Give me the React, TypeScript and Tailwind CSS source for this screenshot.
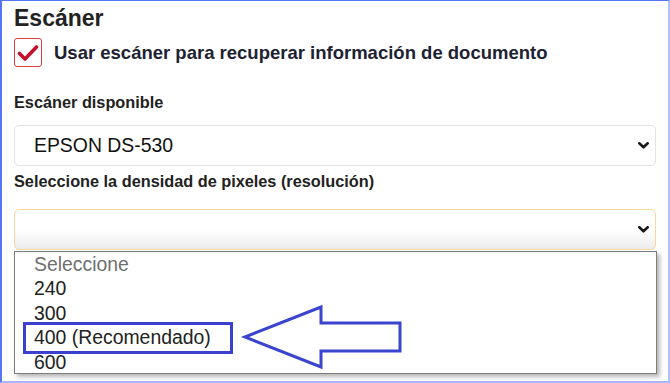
import React from "react";

function Chevron() {
  return (
    <svg width="11" height="7" viewBox="0 0 11 7" className="shrink-0">
      <path d="M1.3 1.3 L5.5 5.3 L9.7 1.3" fill="none" stroke="#1a1a1a" strokeWidth="2.6" strokeLinecap="round" strokeLinejoin="round" />
    </svg>
  );
}

export default function App() {
  const font = { fontFamily: '"Liberation Sans", Arial, sans-serif' };
  return (
    <div
      className="relative w-[670px] h-[383px] bg-white border-l-2 border-t border-r-2 border-b-2 border-l-[#5674f6] border-t-[#5674f6] border-r-[#b1bffb] border-b-[#a9b8fb] overflow-hidden"
      style={font}
    >
      <div className="pl-[12px] pr-[12px] flex flex-col">
        <h1 className="mt-[3px] text-[23px] leading-[28px] font-bold text-[#222]">Escáner</h1>

        <div className="mt-[6px] flex items-center h-[29px]">
          <div className="w-[28px] h-[29px] rounded-[3px] border-[1.5px] border-[#d9403f] flex items-center justify-center">
            <svg width="22" height="18" viewBox="0 0 22 18">
              <path d="M2.5 9.5 L8 15 L19.5 3" fill="none" stroke="#c4112a" strokeWidth="3.6" strokeLinecap="round" strokeLinejoin="round" />
            </svg>
          </div>
          <span className="ml-[12px] text-[18.5px] leading-[22px] font-bold text-[#1d2233]">
            Usar escáner para recuperar información de documento
          </span>
        </div>

        <label className="mt-[25px] text-[16.3px] leading-[20px] font-bold text-[#222]">Escáner disponible</label>

        <div className="mt-[13px] h-[41px] w-[642px] rounded-[5px] border border-[#e3e3e3] flex items-center justify-between pl-[19px] pr-[6px]">
          <span className="text-[19.4px] text-[#111]">EPSON DS-530</span>
          <Chevron />
        </div>

        <label className="mt-[5px] text-[16.3px] leading-[20px] font-bold text-[#222]">
          Seleccione la densidad de pixeles (resolución)
        </label>

        <div className="relative mt-[18px] w-[642px]">
          <div className="h-[41px] rounded-[5px] border border-[#f7d7a2] bg-gradient-to-b from-white via-white to-[#ececec] flex items-center justify-end pr-[6px]">
            <Chevron />
          </div>
          <ul className="absolute left-0 top-[42px] w-[643px] h-[123px] bg-white border border-[#7c7c7c] shadow-[3px_3px_4px_rgba(0,0,0,0.28)] pl-[19px] text-[19.4px] leading-[24.4px] text-[#222]">
            <li className="text-[#6f6f6f]">Seleccione</li>
            <li>240</li>
            <li>300</li>
            <li>400 (Recomendado)</li>
            <li>600</li>
          </ul>
        </div>
      </div>

      <div className="absolute left-[21px] top-[321px] w-[210px] h-[32px] border-[3px] border-[#3a41cf]" />

      <svg className="absolute left-0 top-0" width="670" height="383" viewBox="0 0 670 383" style={{ pointerEvents: "none" }}>
        <polygon
          points="-2,0 0,0"
          fill="none"
        />
        <polygon
          points="245,337 321,307 321,323 400,323 400,351 321,351 321,367"
          transform="translate(-2,-1)"
          fill="none"
          stroke="#3a44cf"
          strokeWidth="3"
          strokeLinejoin="miter"
        />
      </svg>
    </div>
  );
}
